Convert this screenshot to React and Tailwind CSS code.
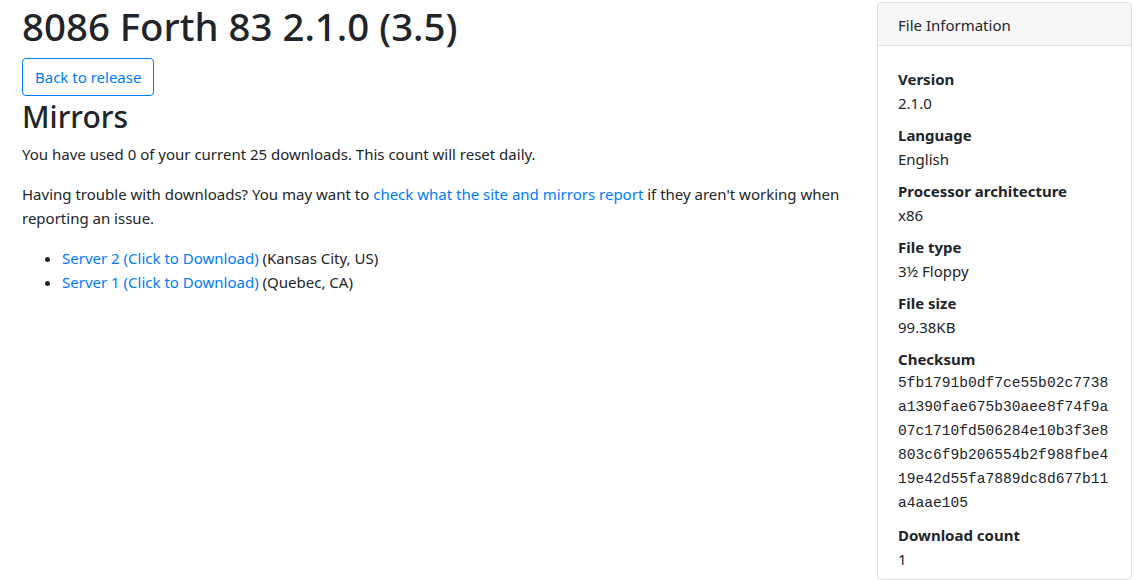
import React from 'react';

const checksum =
  '5fb1791b0df7ce55b02c7738a1390fae675b30aee8f74f9a07c1710fd506284e10b3f3e8803c6f9b206554b2f988fbe419e42d55fa7889dc8d677b11a4aae105';

const fileInfo = [
  { label: 'Version', value: '2.1.0' },
  { label: 'Language', value: 'English' },
  { label: 'Processor architecture', value: 'x86' },
  { label: 'File type', value: '3½ Floppy' },
  { label: 'File size', value: '99.38KB' },
  { label: 'Checksum', value: checksum, mono: true },
  { label: 'Download count', value: '1' },
];

const servers = [
  { name: 'Server 2', location: 'Kansas City, US' },
  { name: 'Server 1', location: 'Quebec, CA' },
];

function FileInformation() {
  return (
    <div className="w-[255px] shrink-0 border border-[#dfdfdf] rounded-[4px] self-start">
      <div className="h-[43px] pt-[1px] flex items-center px-5 bg-[#f7f7f7] border-b border-[#dfdfdf] rounded-t-[4px]">
        File Information
      </div>
      <dl className="pt-[21px] px-5">
        {fileInfo.map((item) => (
          <div key={item.label} className="mb-2">
            <dt className="font-bold leading-6">{item.label}</dt>
            <dd
              className={
                item.mono
                  ? "break-all leading-6 text-[14.6px] font-['Liberation_Mono',monospace]"
                  : 'leading-6'
              }
            >
              {item.value}
            </dd>
          </div>
        ))}
      </dl>
    </div>
  );
}

export default function App() {
  return (
    <div className="min-h-[580px] bg-white text-[#212529] text-[15px] leading-6 font-['Noto_Sans','Open_Sans',sans-serif]">
      <div className="flex gap-[30px] pl-[22px] pr-[15px] pt-[2px]">
        <main className="flex-1 min-w-0">
          <h1 className="text-[38.4px] leading-[48px] font-medium mb-2">8086 Forth 83 2.1.0 (3.5)</h1>
          <a
            href="#"
            className="inline-block border border-[#007bff] text-[#007bff] rounded-[4px] px-3 py-[6px] leading-6"
          >
            Back to release
          </a>
          <h2 className="text-[30px] leading-[38px] font-medium pt-[2px] mb-[6px]">Mirrors</h2>
          <p className="mb-4">You have used 0 of your current 25 downloads. This count will reset daily.</p>
          <p className="mb-4">
            Having trouble with downloads? You may want to{' '}
            <a href="#" className="text-[#007bff]">check what the site and mirrors report</a>{' '}
            if they aren't working when reporting an issue.
          </p>
          <ul className="list-disc pl-10">
            {servers.map((s) => (
              <li key={s.name}>
                <a href="#" className="text-[#007bff]">{s.name} (Click to Download)</a> ({s.location})
              </li>
            ))}
          </ul>
        </main>
        <FileInformation />
      </div>
    </div>
  );
}
